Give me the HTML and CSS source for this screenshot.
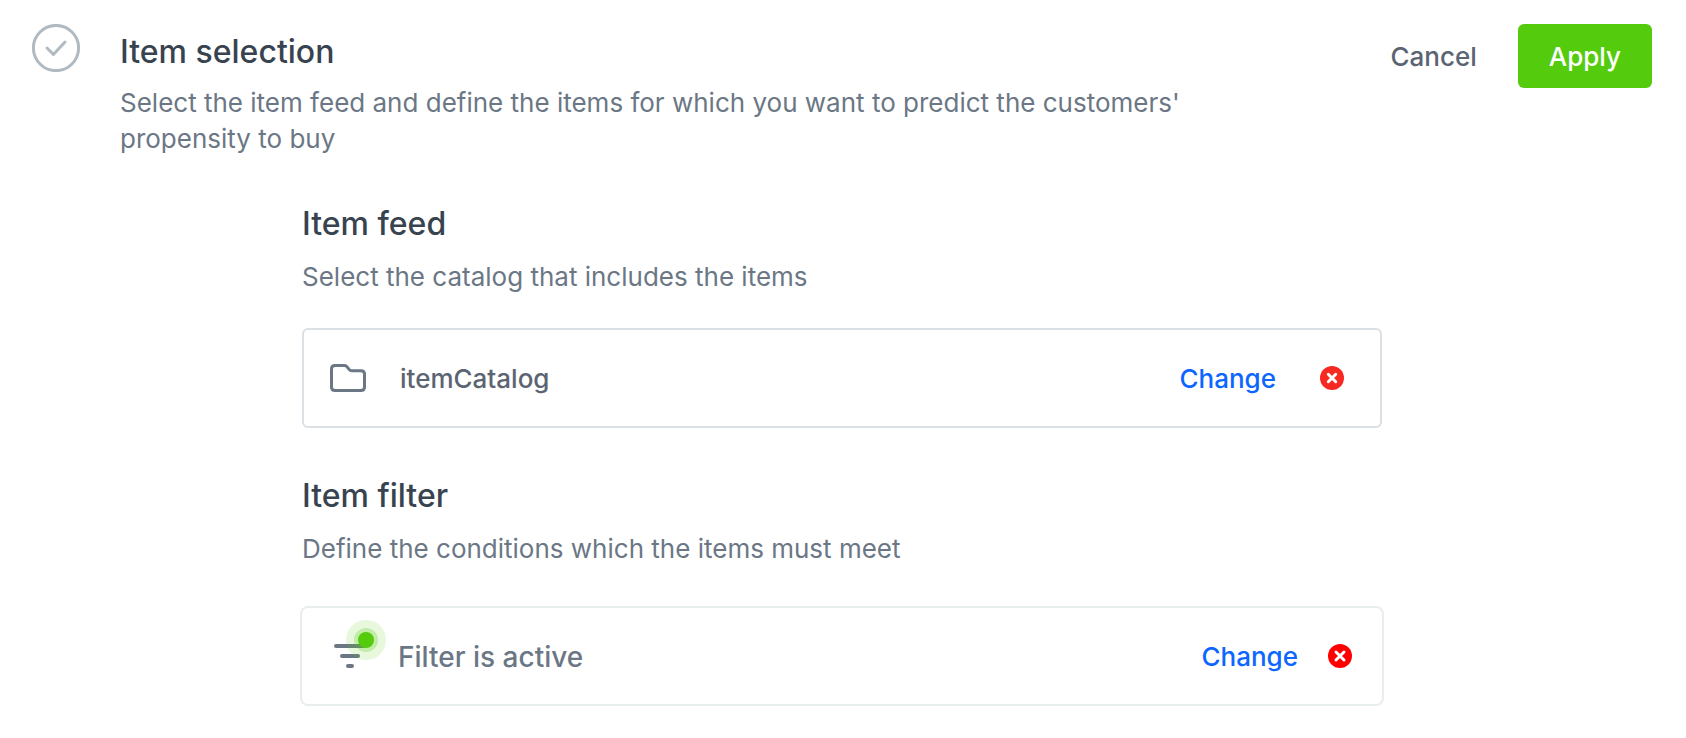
FILE: index.html
```html
<!DOCTYPE html>
<html lang="en">
  <head>
    <meta charset="UTF-8" />
    <meta name="viewport" content="width=device-width, initial-scale=1" />
    <title>Item selection</title>
    <link rel="stylesheet" href="styles.css">
  </head>
  <body>
    <main class="step">
      <header class="step-header">
        <svg class="step-status" viewBox="0 0 48 48" aria-hidden="true">
          <circle cx="24" cy="24" r="22.6" />
          <path d="M15 24l6.4 6.4L33 18" />
        </svg>
        <div class="step-intro">
          <h1>Item selection</h1>
          <p>Select the item feed and define the items for which you want to predict the customers' propensity to buy</p>
        </div>
        <div class="step-actions">
          <button class="cancel-btn" type="button">Cancel</button>
          <button class="apply-btn" type="button">Apply</button>
        </div>
      </header>

      <div class="step-body">
        <section class="feed-section">
          <h2>Item feed</h2>
          <p>Select the catalog that includes the items</p>
          <div class="card feed-card">
            <svg class="folder-icon" viewBox="0 0 36 28" aria-hidden="true">
              <path d="M5 1.5h9.5c1.2 0 1.9.4 2.6 1.3l2.2 2.8c.7.9 1.4 1.2 2.6 1.2H31c2.2 0 3.5 1.2 3.5 3.4V23c0 2.2-1.3 3.5-3.5 3.5H5c-2.2 0-3.5-1.3-3.5-3.5V5c0-2.2 1.3-3.5 3.5-3.5z" />
            </svg>
            <span class="card-label">itemCatalog</span>
            <button class="change-btn" type="button">Change</button>
            <button class="remove-btn" type="button" aria-label="Remove item feed">
              <svg viewBox="0 0 24 24" aria-hidden="true">
                <circle cx="12" cy="12" r="12" />
                <path d="M8.3 8.3l7.4 7.4M15.7 8.3l-7.4 7.4" />
              </svg>
            </button>
          </div>
        </section>

        <section class="filter-section">
          <h2>Item filter</h2>
          <p>Define the conditions which the items must meet</p>
          <div class="card filter-card">
            <svg class="filter-icon" viewBox="0 0 52 56" aria-hidden="true">
              <path d="M2 34h28M8 44h16M14 54h4" />
              <circle class="halo" cx="32" cy="28" r="20" />
              <circle class="ring" cx="32" cy="28" r="12" />
              <circle class="dot" cx="32" cy="28" r="8" />
            </svg>
            <span class="card-label">Filter is active</span>
            <button class="change-btn" type="button">Change</button>
            <button class="remove-btn" type="button" aria-label="Remove item filter">
              <svg viewBox="0 0 24 24" aria-hidden="true">
                <circle cx="12" cy="12" r="12" />
                <path d="M8 8l8 8M16 8l-8 8" />
              </svg>
            </button>
          </div>
        </section>
      </div>
    </main>
  </body>
</html>
```

FILE: styles.css
```css
:root {
  --title: #384350;
  --text: #6b7785;
  --label: #5a6472;
  --blue: #0d66ff;
  --green: #54cb0c;
}

* {
  box-sizing: border-box;
}

body {
  margin: 0;
  background: #fff;
  color: var(--text);
  font-family: Inter, "Liberation Sans", sans-serif;
  font-size: 26px;
  line-height: 36px;
}

h1, h2, p {
  margin: 0;
}

h1, h2 {
  color: var(--title);
  font-size: 32px;
  font-weight: 550;
  line-height: 40px;
}

button {
  padding: 0;
  border: none;
  background: none;
  font: inherit;
  font-weight: 550;
  cursor: pointer;
}

svg {
  display: block;
  flex: none;
  fill: none;
  stroke-linecap: round;
  stroke-linejoin: round;
}

.step {
  padding: 24px 34px 32px 32px;
}

.step-header {
  display: flex;
  align-items: flex-start;
  gap: 40px;
}

.step-status {
  width: 48px;
  height: 48px;
  stroke: #b0bac2;
  stroke-width: 3;
}

.step-intro {
  flex: 1;
  padding-top: 8px;
}

.step-intro p {
  max-width: 1120px;
  margin-top: 13px;
}

.step-actions {
  display: flex;
  gap: 41px;
}

.cancel-btn {
  padding-top: 2px;
  color: var(--label);
}

.apply-btn {
  height: 64px;
  padding: 2px 31px 0;
  border-radius: 6px;
  background: var(--green);
  color: #fff;
}

.step-body {
  max-width: 1080px;
  margin: 47px auto 0;
}

.step-body p {
  margin-top: 15px;
}

.card {
  display: flex;
  align-items: center;
  height: 100px;
  border: 2px solid #dae0e4;
  border-radius: 6px;
}

.card-label {
  padding-top: 2px;
  font-weight: 550;
}

.feed-card {
  margin-top: 33px;
  padding: 0 36px 0 26px;
}

.feed-card .card-label {
  margin-left: 34px;
  color: var(--label);
}

.filter-section {
  margin-top: 48px;
}

.filter-card {
  margin: 39px -2px 0;
  padding: 0 30px 0 32px;
  border-color: #e8eeed;
  border-radius: 8px;
}

.filter-card .card-label {
  margin-left: 12px;
  font-size: 28px;
}

.folder-icon {
  width: 36px;
  height: 28px;
  stroke: var(--text);
  stroke-width: 3;
}

.filter-icon {
  width: 52px;
  height: 56px;
  margin-bottom: 32px;
  stroke: var(--text);
  stroke-width: 4;
}

.filter-icon circle {
  stroke: none;
  fill: var(--green);
}

.filter-icon .halo {
  opacity: 0.14;
}

.filter-icon .ring {
  opacity: 0.25;
}

.change-btn {
  margin-left: auto;
  padding-top: 2px;
  color: var(--blue);
}

.feed-card .remove-btn {
  margin-left: 44px;
  color: #f62a23;
}

.filter-card .remove-btn {
  margin-left: 30px;
  color: #ff0000;
}

.remove-btn svg {
  width: 24px;
  height: 24px;
}

.remove-btn circle {
  fill: currentColor;
}

.remove-btn path {
  stroke: #fff;
  stroke-width: 3;
}
```
